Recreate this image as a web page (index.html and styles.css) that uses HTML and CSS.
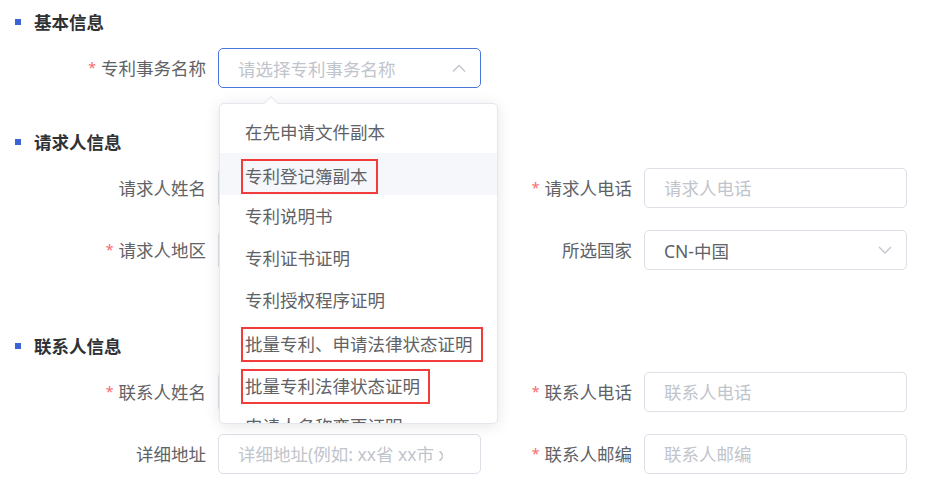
FILE: index.html
```html
<!DOCTYPE html>
<html>
<head>
	<meta charset="utf-8">
	<title>专利事务申请</title>
	<link rel="stylesheet" href="styles.css">
</head>
<body>
	<div class="page">
		<h3 class="section-title">基本信息</h3>
		<div class="form-row">
			<div class="form-item">
				<label class="label required">专利事务名称</label>
				<div class="select is-focus">
					<span class="select-placeholder">请选择专利事务名称</span>
					<svg class="chevron" width="14" height="8" viewBox="0 0 14 8"><polyline points="1,7.5 7,1.5 13,7.5" fill="none" stroke="#c0c4cc" stroke-width="1.3"/></svg>
					<div class="dropdown">
						<ul class="dropdown-list">
							<li>在先申请文件副本</li>
							<li class="hover"><span class="mark">专利登记簿副本</span></li>
							<li>专利说明书</li>
							<li>专利证书证明</li>
							<li>专利授权程序证明</li>
							<li><span class="mark">批量专利、申请法律状态证明</span></li>
							<li><span class="mark">批量专利法律状态证明</span></li>
							<li>申请人名称变更证明</li>
						</ul>
					</div>
				</div>
			</div>
		</div>

		<h3 class="section-title applicant">请求人信息</h3>
		<div class="form-row">
			<div class="form-item">
				<label class="label">请求人姓名</label>
				<input class="input" type="text" placeholder="请求人姓名">
			</div>
			<div class="form-item">
				<label class="label required">请求人电话</label>
				<input class="input" type="text" placeholder="请求人电话">
			</div>
		</div>
		<div class="form-row">
			<div class="form-item">
				<label class="label required">请求人地区</label>
				<input class="input" type="text" placeholder="请选择地区">
			</div>
			<div class="form-item">
				<label class="label">所选国家</label>
				<div class="select">
					<span class="select-value">CN-中国</span>
					<svg class="chevron" width="14" height="8" viewBox="0 0 14 8"><polyline points="1,1 7,7 13,1" fill="none" stroke="#c0c4cc" stroke-width="1.3"/></svg>
				</div>
			</div>
		</div>

		<h3 class="section-title contact">联系人信息</h3>
		<div class="form-row">
			<div class="form-item">
				<label class="label required">联系人姓名</label>
				<input class="input" type="text" placeholder="联系人姓名">
			</div>
			<div class="form-item">
				<label class="label required">联系人电话</label>
				<input class="input" type="text" placeholder="联系人电话">
			</div>
		</div>
		<div class="form-row">
			<div class="form-item">
				<label class="label">详细地址</label>
				<input class="input address" type="text" placeholder="详细地址(例如: xx省 xx市 xx区 xx街道)">
			</div>
			<div class="form-item">
				<label class="label required">联系人邮编</label>
				<input class="input" type="text" placeholder="联系人邮编">
			</div>
		</div>
	</div>
</body>
</html>
```

FILE: styles.css
```css
body {
  margin: 0;
  background-color: #fff;
  font-family: "Noto Sans", "Noto Sans CJK SC", sans-serif;
  font-size: 17.5px;
  color: #606266;
}

.page {
  padding-top: 10px;
}

.section-title {
  display: flex;
  align-items: center;
  margin: 0 0 14px 0;
  padding-left: 15px;
  height: 24px;
  line-height: 24px;
  font-size: 17.5px;
  font-weight: bold;
  color: #303133;
}

.section-title::before {
  content: "";
  width: 6px;
  height: 6px;
  margin-right: 13px;
  background-color: #3b63d3;
}

/* margins collapse with the row's 22px bottom margin */
.section-title.applicant {
  margin-top: 42px;
}

.section-title.contact {
  margin-top: 64px;
}

.form-row {
  display: grid;
  grid-template-columns: 413px 413px;
  column-gap: 13px;
  padding-left: 68px;
  margin-bottom: 22px;
}

.form-item {
  display: flex;
  align-items: center;
  height: 40px;
}

.label {
  width: 150px;
  box-sizing: border-box;
  padding-right: 12px;
  text-align: right;
  line-height: 40px;
  color: #606266;
}

.label.required::before {
  content: "*";
  display: inline-block;
  margin-right: 5px;
  font-size: 14px;
  vertical-align: top;
  color: #f56c6c;
}

.input,
.select {
  width: 263px;
  height: 40px;
  box-sizing: border-box;
  padding: 0 19px;
  border: 1px solid #dcdfe6;
  border-radius: 5px;
  font-family: inherit;
  font-size: 17.5px;
  color: #606266;
  outline: none;
}

.input::placeholder {
  color: #c0c4cc;
}

.input.address {
  padding-right: 37px;
}

.select {
  position: relative;
  display: flex;
  align-items: center;
  justify-content: space-between;
  padding-right: 14px;
}

.select.is-focus {
  border-color: #4a77db;
}

.select-placeholder {
  color: #c0c4cc;
}

.select-value {
  color: #606266;
}

.chevron {
  display: block;
}

.dropdown {
  position: absolute;
  top: 54px;
  left: 0;
  z-index: 10;
  width: 279px;
  height: 321px;
  box-sizing: border-box;
  border: 1px solid #e4e7ed;
  border-radius: 5px;
  background-color: #fff;
  box-shadow: 0 2px 15px rgba(0, 0, 0, 0.1);
}

.dropdown::before {
  content: "";
  position: absolute;
  top: -6px;
  left: 46px;
  width: 9px;
  height: 9px;
  border-top: 1px solid #e4e7ed;
  border-left: 1px solid #e4e7ed;
  background-color: #fff;
  transform: rotate(45deg);
}

.dropdown-list {
  list-style: none;
  margin: 0;
  padding: 7px 0 0 0;
  height: 100%;
  box-sizing: border-box;
  overflow: hidden;
  border-radius: 5px;
}

.dropdown-list li {
  height: 42px;
  line-height: 42px;
  padding: 0 25px;
  white-space: nowrap;
  color: #606266;
}

.dropdown-list li.hover {
  background-color: #f5f7fa;
}

.mark {
  display: inline-block;
  height: 35px;
  line-height: 31px;
  box-sizing: border-box;
  margin-left: -4px;
  padding: 0 8px 0 2px;
  border: 2px solid #f23b3b;
  vertical-align: middle;
}
```
